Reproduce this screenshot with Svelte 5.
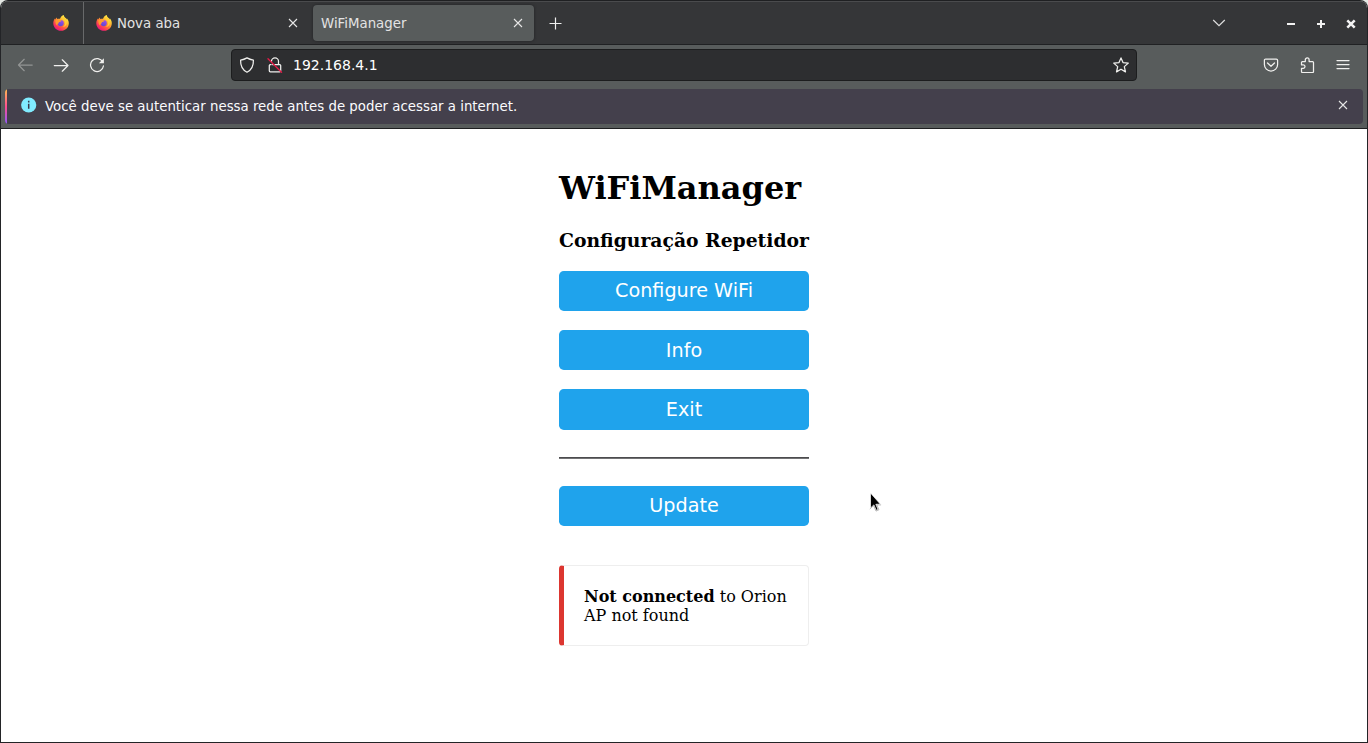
<script>
  const actions = ['Configure WiFi', 'Info', 'Exit'];
</script>

{#snippet firefox()}
  <svg class="fox" width="16" height="16" viewBox="0 0 16 16">
    <defs>
      <linearGradient id="flame" x1="0.85" y1="0.05" x2="0.2" y2="0.95">
        <stop offset="0.05" stop-color="#fff04a" />
        <stop offset="0.35" stop-color="#ffb52e" />
        <stop offset="0.6" stop-color="#ff6a38" />
        <stop offset="0.85" stop-color="#f92c63" />
        <stop offset="1" stop-color="#e31587" />
      </linearGradient>
      <linearGradient id="globe" x1="0.7" y1="0" x2="0.3" y2="1">
        <stop offset="0" stop-color="#a04de8" />
        <stop offset="1" stop-color="#5b48d0" />
      </linearGradient>
    </defs>
    <path fill="url(#flame)" d="M10.8.1c.1 1.4.9 2.2 1.900 3 .6.5.9 1 1 1.400.2-.4.2-.8.1-1.200 1.400 1.500 2.100 3.300 2 5.200-.2 4.200-3.500 7.300-7.700 7.300C3.700 15.800.4 12.600.3 8.500.2 6.500.9 4.600 1.900 3.500l.2 1c.4-.9 1-1.600 1.800-2.100-.1.700.1 1.300.6 1.700.8-.4 1.700-.4 2.500-.3.800-1.900 2-3.200 3.800-3.700z" />
    <circle cx="7.700" cy="8.100" r="3.100" fill="url(#globe)" />
    <path fill="#ff9b2e" d="M2.500 5c1.300-.8 2.800-.8 4.200-.1.500.3 1.300.4 2 .5 0 .9-1.900 1.400-2.500 1.700-.6.400-.3 1.200-.8 1.500-.9.400-1.300 1.200-1.100 2.200C2.700 9.500 2.100 7 2.500 5z" />
    <path fill="#ffcf35" d="M9.500 4.200c1.800.5 2.700 2 2.700 3.700 0 2.200-1.400 3.800-3.400 4.200 3 .2 5-1.800 5-4.600 0-2.300-1.700-4.200-2.700-5.400-1 .4-1.500 1.100-1.600 2.100z" />
  </svg>
{/snippet}

{#snippet cross()}
  <svg width="10" height="10" viewBox="0 0 10 10" fill="none" stroke="#e6e6e6" stroke-width="1.1"><path d="M1 1l8 8M9 1L1 9" /></svg>
{/snippet}

<div class="backdrop">
  <div class="window">
    <header class="tabs">
      <div class="pinned">{@render firefox()}</div>
      <div class="tab">
        {@render firefox()}
        <span>Nova aba</span>
        <button class="bare">{@render cross()}</button>
      </div>
      <div class="tab active">
        <span>WiFiManager</span>
        <button class="bare">{@render cross()}</button>
      </div>
      <button class="bare add">
        <svg width="13" height="13" viewBox="0 0 13 13" stroke="#f0f0f0" stroke-width="1.200"><path d="M6.500 .5v12M.5 6.500h12" /></svg>
      </button>
      <button class="bare list">
        <svg width="14" height="8" viewBox="0 0 14 8" fill="none" stroke="#dedede" stroke-width="1.2"><path d="M1.200 1L7 6.700 12.800 1" /></svg>
      </button>
      <div class="controls">
        <svg width="10" height="10" viewBox="0 0 10 10" stroke="#f2f2f2" stroke-width="2"><path d="M1 5h8" /></svg>
        <svg width="10" height="10" viewBox="0 0 10 10" stroke="#f2f2f2" stroke-width="2"><path d="M1 5h8M5 1v8" /></svg>
        <svg width="10" height="10" viewBox="0 0 10 10" stroke="#f2f2f2" stroke-width="2.500"><path d="M1.300 1.300l7.400 7.400M8.700 1.300L1.300 8.700" /></svg>
      </div>
    </header>

    <nav class="toolbar">
      <svg class="ico back" viewBox="0 0 16 16"><path d="M15.200 8H1.500M7.200 2.300L1.500 8l5.700 5.700" /></svg>
      <svg class="ico forward" viewBox="0 0 16 16"><path d="M1.300 8.500h13.700M9.300 2.800L15 8.500l-5.700 5.700" /></svg>
      <svg class="ico reload" viewBox="0 0 16 16"><path d="M13.800 5A6.500 6.500 0 1 0 14.500 8.800" /><path d="M14.900 1.300v5H9.900z" fill="#f0f0ee" stroke="none" /></svg>
      <div class="url">
        <svg class="ico" viewBox="0 0 16 16"><path d="M8 .9c1.800 1.100 4 1.900 6.400 2.300.2 5.500-1.900 9.700-6.400 12C3.500 12.900 1.400 8.700 1.600 3.200 4 2.800 6.200 2 8 .9z" /></svg>
        <svg class="ico lock" viewBox="0 0 16 16"><path d="M4.500 4.300a3.500 3.500 0 0 1 7 0V7M5.500 7.600h7.200q1 0 1 1v5.200q0 1-1 1H3.300q-1 0-1-1V8.600q0-1 1-1h.8" /><path d="M1 1.700l13.500 13.500" stroke="#e11a45" stroke-width="1.400" /></svg>
        <span>192.168.4.1</span>
        <svg class="ico star" viewBox="0 0 16 16"><path d="M8 .9l2 4.700 5.300.5-4 3.500 1.200 5.300L8 12.200l-4.500 2.700 1.200-5.300-4-3.500L6 5.600z" /></svg>
      </div>
      <div class="tools">
        <svg class="ico" viewBox="0 0 16 16"><path d="M2.700 2h10.600q1.300 0 1.300 1.300v4.200a6.600 6.600 0 0 1-13.200 0V3.300Q1.400 2 2.700 2zM4.500 6L8 9.300 11.500 6" /></svg>
        <svg class="ico" viewBox="0 0 16 16"><path d="M2.500 6.700V5.500q0-.9.900-.9h2.900V2.800a1.900 1.900 0 0 1 3.800 0v1.800h3.500q.9 0 .9.900v9.100q0 .9-.9.900H3.400q-.9 0-.9-.9v-3.300h1.800a1.700 1.700 0 0 0 0-3.400H2.500z" /></svg>
        <svg class="ico" viewBox="0 0 16 16"><path d="M2 3.500h12M2 7.500h12M2 11.500h12" /></svg>
      </div>
    </nav>

    <div class="strip">
      <div class="notice">
        <svg width="16" height="16" viewBox="0 0 16 16"><circle cx="7.700" cy="8" r="7.600" fill="#80ebff" /><path d="M7.700 6.700v5M7.700 3.800v1.700" stroke="#38384a" stroke-width="1.500" /></svg>
        <span>Você deve se autenticar nessa rede antes de poder acessar a internet.</span>
        <button class="bare">{@render cross()}</button>
      </div>
    </div>

    <main>
      <div class="wrap">
        <h1>WiFiManager</h1>
        <h3>Configuração Repetidor</h3>
        {#each actions as label}
          <button class="action">{label}</button>
        {/each}
        <hr />
        <button class="action update">Update</button>
        <div class="msg"><strong>Not connected</strong> to Orion<br />AP not found</div>
      </div>
      <svg class="pointer" width="14" height="21" viewBox="0 0 14 21"><path d="M1.500 1v15l3.400-3.100 2.300 5.400 1.900-.9-2.300-5.100 4.500-.2z" fill="#000" stroke="#fff" stroke-width=".7" /><path d="M.8 17l3.800-3.400 2.400 5.500 3-1.400-2.300-4.800h4.400" fill="none" stroke="#999" stroke-width=".7" /></svg>
    </main>
  </div>
</div>

<style>
  :global(body) { margin: 0; }
  .backdrop { height: 743px; background: #e4e8e4; overflow: hidden; }
  .window {
    box-sizing: border-box; height: 743px; border: 1px solid #232427; border-top-color: #1f2022;
    border-radius: 8px 8px 0 0; background: #fff; overflow: hidden; display: flex; flex-direction: column;
    font-family: "DejaVu Sans", sans-serif;
  }
  svg { display: block; flex: none; }
  .bare { border: 0; padding: 0; background: none; flex: none; }
  .tabs {
    box-sizing: border-box; height: 44px; flex: none; display: flex; background: #353638;
    border-top: 1px solid #4a4b4d; border-bottom: 1px solid #202123; color: #e3e3e3; font-size: 13.33px;
  }
  .pinned { box-sizing: border-box; width: 83px; padding: 13px 0 0 52px; border-right: 1px solid #68696a; }
  .tab { box-sizing: border-box; display: flex; align-items: center; }
  .tab span { flex: 1; margin-top: 1px; }
  .tab:not(.active) { width: 229px; padding: 0 15px 0 12px; gap: 5px; }
  .tab.active {
    width: 221px; height: 36px; margin-top: 3px; padding: 0 11px 0 8px; border-radius: 4px;
    background: #585c5c; box-shadow: 0 0 3px #202123;
  }
  .add { margin-left: 15px; }
  .list { margin-left: auto; }
  .controls { display: flex; align-items: center; gap: 20px; margin: 1px 11px 0 60px; }
  .toolbar {
    box-sizing: border-box; height: 44px; flex: none; background: #585c5c; display: flex;
    align-items: center; padding: 0 16px 4px;
  }
  .ico { width: 16px; height: 16px; fill: none; stroke: #f0f0ee; stroke-width: 1.25; stroke-linejoin: round; stroke-linecap: round; }
  .back { opacity: .38; }
  .forward, .reload { margin-left: 20px; }
  .url {
    box-sizing: border-box; width: 906px; height: 32px; margin-left: 126px; padding: 0 7px;
    border: 1px solid #1c1d1e; border-radius: 4px; background: #2d2e30; display: flex; align-items: center;
    color: #fff; font-size: 14px;
  }
  .lock { margin-left: 12px; }
  .url span { margin-left: 10px; }
  .star { margin-left: auto; }
  .tools { display: flex; gap: 20px; margin-left: 126px; }
  .strip { box-sizing: border-box; height: 40px; flex: none; padding: 0 4px 4px; background: #585c5c; border-bottom: 1px solid #1d1e20; }
  .notice {
    box-sizing: border-box; height: 35px; padding: 0 15px 3px 16px; border-radius: 4px;
    background: linear-gradient(#ffbd4f, #ff4f90 50%, #9059ff) 0 0 / 2px 100% no-repeat #44404c;
    color: #fbfbfe; font-size: 13.33px; display: flex; align-items: center;
  }
  .notice span { margin: 2px 0 0 8px; flex: 1; }
  main { position: relative; flex: 1; display: flex; justify-content: center; color: #000; font-family: "DejaVu Serif", serif; }
  .wrap { width: 250px; }
  h1 { margin: 40px 0 0; font-size: 32px; line-height: 38px; }
  h3 { margin: 22px 0 0; font-size: 18.75px; line-height: 23px; white-space: nowrap; }
  .action {
    display: block; width: 100%; height: 40px; margin: 19px 0 0; padding: 0; border: 0; border-radius: 4.8px;
    background: #1fa3ec; color: #fff; font: 19.2px/38px "DejaVu Sans", sans-serif;
  }
  .action:nth-of-type(2) { padding-top: 2px; }
  .action:nth-of-type(3) { height: 41px; padding-top: 1px; }
  hr { margin: 27px 0 0; border: 0; height: 2px; background: linear-gradient(#4c4c4e 50%, #727274 50%); }
  .action.update { margin-top: 27px; }
  .msg {
    box-sizing: border-box; height: 81px; margin-top: 39px; padding: 21px 19px 20px 20px; border: 1px solid #eee;
    border-left: 5px solid #dc3630; border-radius: 4px; font-size: 16px; line-height: 19px;
  }
  .pointer { position: absolute; left: 868px; top: 363px; }
</style>
